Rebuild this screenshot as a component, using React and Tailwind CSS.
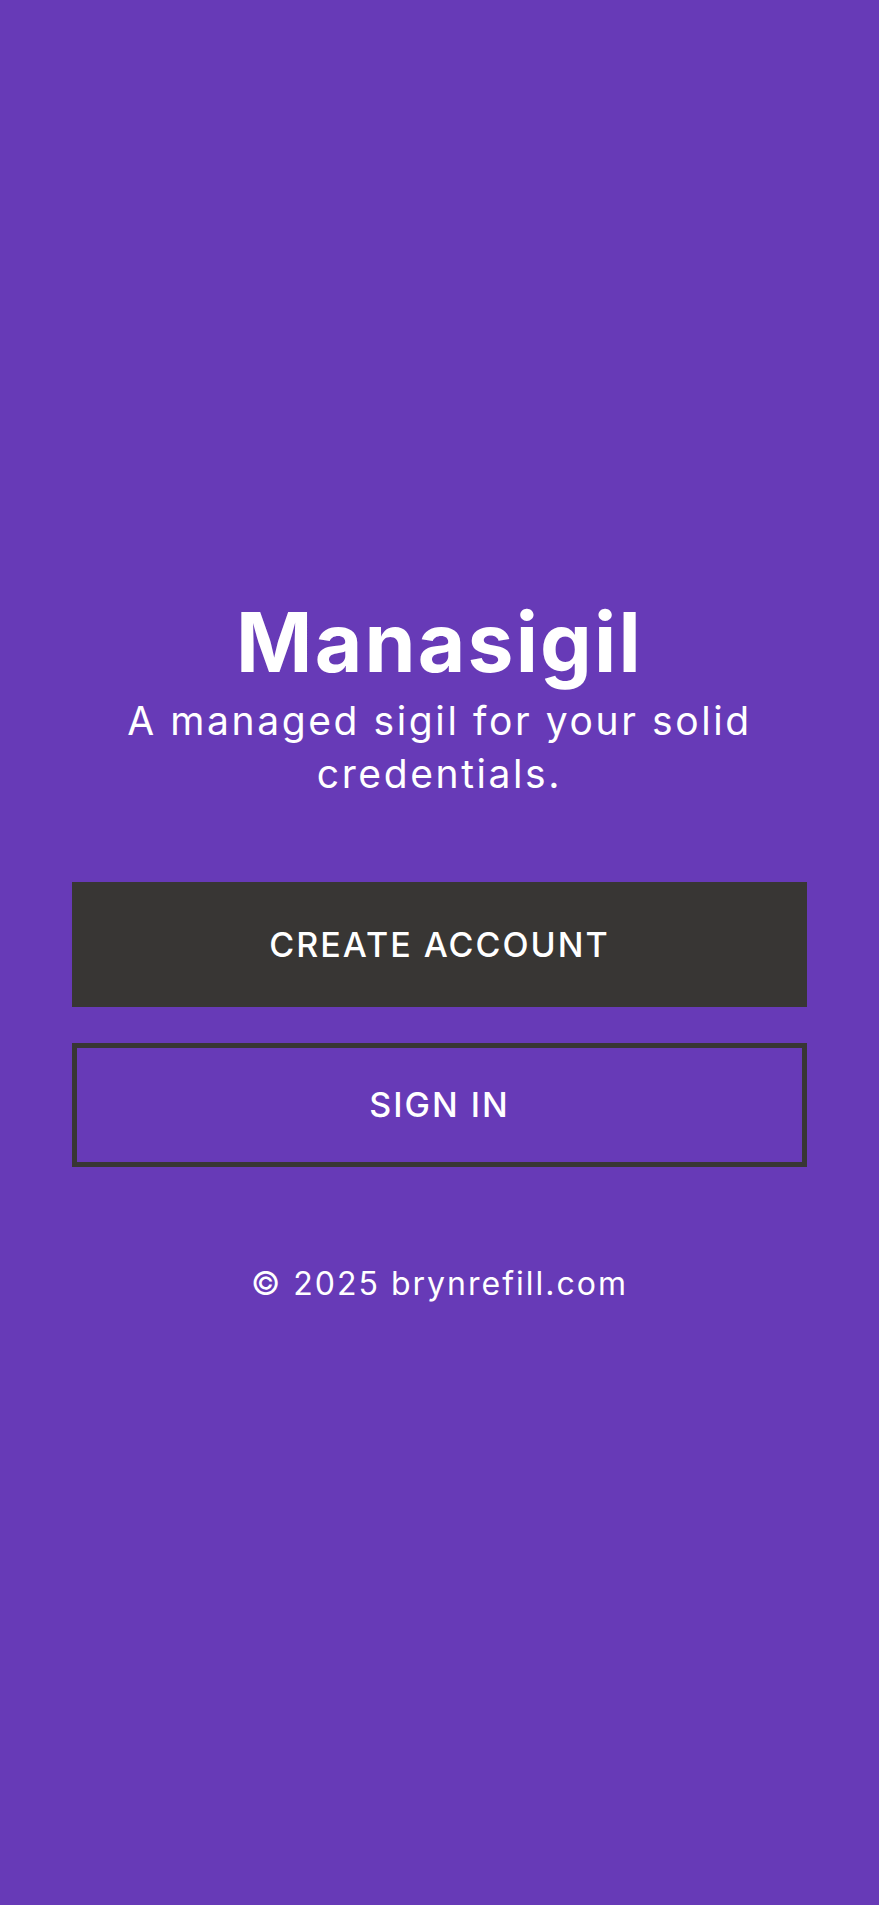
export default function App() {
  return (
    <div
      className="min-h-screen w-full bg-[#673ab7] text-white flex flex-col items-center justify-center"
      style={{ fontFamily: "Inter, 'Open Sans', sans-serif" }}
    >
      <h1 className="text-[82px] leading-[82px] font-bold tracking-[2.2px]">Manasigil</h1>
      <p className="mt-[10px] w-full px-[60px] text-center text-[39px] leading-[53px] font-normal tracking-[2.6px]">
        A managed sigil for your solid credentials.
      </p>
      <div className="mt-[82px] w-full px-[72px] flex flex-col gap-[36px]">
        <button className="h-[125px] w-full bg-[#383634] text-white text-[34px] font-medium uppercase tracking-[2px] flex items-center justify-center">
          Create account
        </button>
        <button className="h-[124px] w-full border-[5px] border-[#383634] text-white text-[34px] font-medium uppercase tracking-[2px] flex items-center justify-center">
          Sign in
        </button>
      </div>
      <p className="mt-[97px] text-[32px] leading-[40px] tracking-[2px]">© 2025 brynrefill.com</p>
    </div>
  );
}
